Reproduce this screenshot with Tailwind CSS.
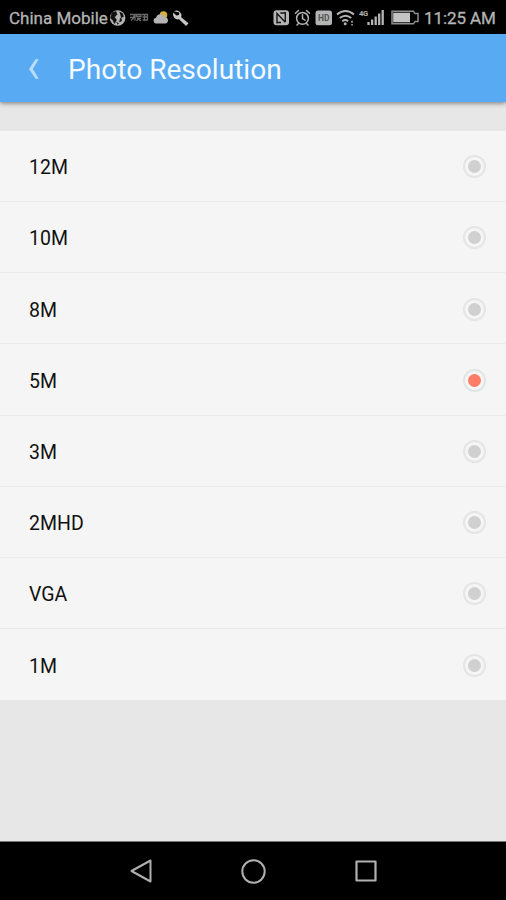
<!DOCTYPE html>
<html lang="en">
<head>
<meta charset="utf-8">
<title>Photo Resolution</title>
<script src="https://cdn.jsdelivr.net/npm/@tailwindcss/browser@4"></script>
</head>
<body class="w-[506px] h-[900px] overflow-hidden bg-[#e7e7e7] font-['Roboto','Liberation_Sans',sans-serif] flex flex-col">
<div class="h-[34px] shrink-0 bg-black text-[#b4b4b4] flex items-center pl-[9px] pr-[10px] pt-[2px] text-[17px] leading-[32px] whitespace-nowrap">
  <span class="w-[100px] [-webkit-text-stroke:0.3px]">China Mobile</span>
  <svg class="w-[82px] h-[20px] shrink-0" viewBox="109 8 82 20">
    <circle cx="117.6" cy="18" r="7.8" fill="#b4b4b4"/>
    <path d="M112 12.5l4-1 1 3-2.500 2.500 2 3-2 3.500-1.500-3-2.500-2.500zM119.500 12l3 1.500 1 3-3 1.500-1 4 2.500-1.500M116.500 22l2 1.500-1 1" fill="#111" stroke="#111" stroke-width=".6"/>
    <g stroke="#6a6a6a" fill="none" stroke-width="1.300"><path d="M130 14.500h5l-2 3h-3M131 20.500l4-4v4M136.500 14.500h4.500v2h-4.500zM137 18.500h4M136.500 21l2-2 2.500 2M142 14.500h5.500v6M142.500 17h5M142.500 20h5M144.500 14v7"/></g>
    <circle cx="163.500" cy="15" r="3.800" fill="#d3b340"/>
    <path d="M155.500 23.500a3 3 0 0 1 .6-5.800a4.600 4.600 0 0 1 8.600-.8a3.400 3.400 0 0 1 1 6.600z" fill="#b4b4b4"/>
    <path d="M174 11.300a5 5 0 0 1 7.200 5.900l7.300 6.100-2.400 2.600-7.100-6.600a5 5 0 0 1-5.700-6.700l3.100 2.900 2.600-.6.300-2.500z" fill="#c6c6c6"/>
  </svg>
  <svg class="w-[148px] h-[20px] shrink-0 ml-auto mr-[4px]" viewBox="272 8 148 20">
    <rect x="273.500" y="10.300" width="15.500" height="15" rx="3" fill="#b4b4b4"/>
    <path d="M277 23.500v-10l8.300 8.700M280.300 13l5.300 0M285.300 12v10M277 22.500h4" fill="none" stroke="#151515" stroke-width="1.400"/>
    <g fill="none" stroke="#b4b4b4" stroke-width="1.500" stroke-linecap="round"><circle cx="302.500" cy="18.300" r="5.900"/><path d="M302.500 14.800v3.800l2.500 1.500M295.500 13.200l3-2.700M309.500 13.200l-3-2.700M298.500 23.500l-1.500 1.500M306.500 23.500l1.500 1.500"/></g>
    <rect x="315.500" y="10.500" width="16.500" height="14.800" rx="2.500" fill="#b4b4b4"/>
    <text x="323.700" y="21.200" text-anchor="middle" font-size="8.500" font-weight="700" fill="#555">HD</text>
    <g fill="none" stroke="#b4b4b4" stroke-width="2"><path d="M337 14.500q8.500-7 17 0M339.800 18q5.700-4.600 11.400 0M342.300 21.200q2.900-2.400 5.800 0"/></g>
    <circle cx="345.200" cy="23.700" r="1.500" fill="#b4b4b4"/>
    <path d="M350.600 22.500l1.400-2.200 1.400 2.200zM351.300 24h1.500v1.600h-1.500z" fill="#b4b4b4"/>
    <text x="359" y="16.200" font-size="7.500" font-weight="700" fill="#b4b4b4" textLength="9">4G</text>
    <path d="M368.500 25v-3M372.100 25v-5.500M375.700 25v-8.500M379.200 25v-11.500M382.700 25v-15" stroke="#b4b4b4" stroke-width="2.300" fill="none"/>
    <path d="M392 11.300h21.500l1.500 2.300h3v7.800h-3l-1.500 2.400h-21.500z" fill="none" stroke="#8e8e8e" stroke-width="1.500"/>
    <path d="M393.200 12.700h16.800v9.600h-16.800z" fill="#c4c4c4"/>
  </svg>
  <span class="w-[72px] tracking-[-0.1px] [-webkit-text-stroke:0.3px]">11:25 AM</span>
</div>
<header class="relative z-10 h-[68px] shrink-0 bg-[#58abf3] shadow-[0_1px_5px_rgba(0,0,0,0.5)] flex items-center pl-[28px] pt-px">
  <svg class="w-[12px] h-[22px]" viewBox="0 0 12 22"><path d="M7.500 1.200L1 11 7.500 20.800 10.800 20.800 4.800 11 10.800 1.200z" fill="#b9ddfb"/></svg>
  <h1 class="ml-[28px] pt-[4px] text-[28.1px] leading-none text-[#f5faff]">Photo Resolution</h1>
</header>
<main class="mt-[29px] h-[569px] shrink-0 bg-[#f5f5f5] grid grid-rows-8 divide-y divide-[#ebebeb] text-[19.5px] text-[#111]">
  <div class="flex items-center justify-between pl-[29px] pr-[20px] pt-px"><span class="pt-[3px]">12M</span><i class="size-[23px] rounded-full border-2 border-[#e5e5e5] grid place-items-center"><b class="size-[13px] rounded-full bg-[#d0d0d0]"></b></i></div>
  <div class="flex items-center justify-between pl-[29px] pr-[20px] pt-px"><span class="pt-[2px]">10M</span><i class="size-[23px] rounded-full border-2 border-[#e5e5e5] grid place-items-center"><b class="size-[13px] rounded-full bg-[#d0d0d0]"></b></i></div>
  <div class="flex items-center justify-between pl-[29px] pr-[20px] pt-[2px]"><span class="pt-[2px]">8M</span><i class="size-[23px] rounded-full border-2 border-[#e5e5e5] grid place-items-center"><b class="size-[13px] rounded-full bg-[#d0d0d0]"></b></i></div>
  <div class="flex items-center justify-between pl-[29px] pr-[20px] pt-[2px]"><span class="pt-[2px]">5M</span><i class="size-[23px] rounded-full border-2 border-[#dfe6e3] grid place-items-center"><b class="size-[13px] rounded-full bg-[#ff7c66]"></b></i></div>
  <div class="flex items-center justify-between pl-[29px] pr-[20px] pt-[2px]"><span class="pt-[3px]">3M</span><i class="size-[23px] rounded-full border-2 border-[#e5e5e5] grid place-items-center"><b class="size-[13px] rounded-full bg-[#d0d0d0]"></b></i></div>
  <div class="flex items-center justify-between pl-[29px] pr-[20px] pt-[2px]"><span class="pt-[2px]">2MHD</span><i class="size-[23px] rounded-full border-2 border-[#e5e5e5] grid place-items-center"><b class="size-[13px] rounded-full bg-[#d0d0d0]"></b></i></div>
  <div class="flex items-center justify-between pl-[29px] pr-[20px] pt-[2px]"><span class="pt-[2px]">VGA</span><i class="size-[23px] rounded-full border-2 border-[#e5e5e5] grid place-items-center"><b class="size-[13px] rounded-full bg-[#d0d0d0]"></b></i></div>
  <div class="flex items-center justify-between pl-[29px] pr-[20px] pt-[2px]"><span class="pt-[2px]">1M</span><i class="size-[23px] rounded-full border-2 border-[#e5e5e5] grid place-items-center"><b class="size-[13px] rounded-full bg-[#d0d0d0]"></b></i></div>
</main>
<nav class="mt-auto h-[59px] shrink-0 bg-black border-t border-[#777] flex items-center pl-[129px] gap-[88px]">
  <svg class="size-[24px]" viewBox="0 0 24 24" fill="none" stroke="#b0b0b0" stroke-width="2" stroke-linejoin="round"><path d="M21.500 1.500v21L2.500 12z"/></svg>
  <svg class="size-[25px]" viewBox="0 0 25 25" fill="none" stroke="#b0b0b0" stroke-width="2"><circle cx="12.500" cy="12.500" r="11.200"/></svg>
  <svg class="size-[24px]" viewBox="0 0 24 24" fill="none" stroke="#b0b0b0" stroke-width="2.200" stroke-linejoin="round"><path d="M2.500 2.500h19v19h-19z"/></svg>
</nav>
</body>
</html>
